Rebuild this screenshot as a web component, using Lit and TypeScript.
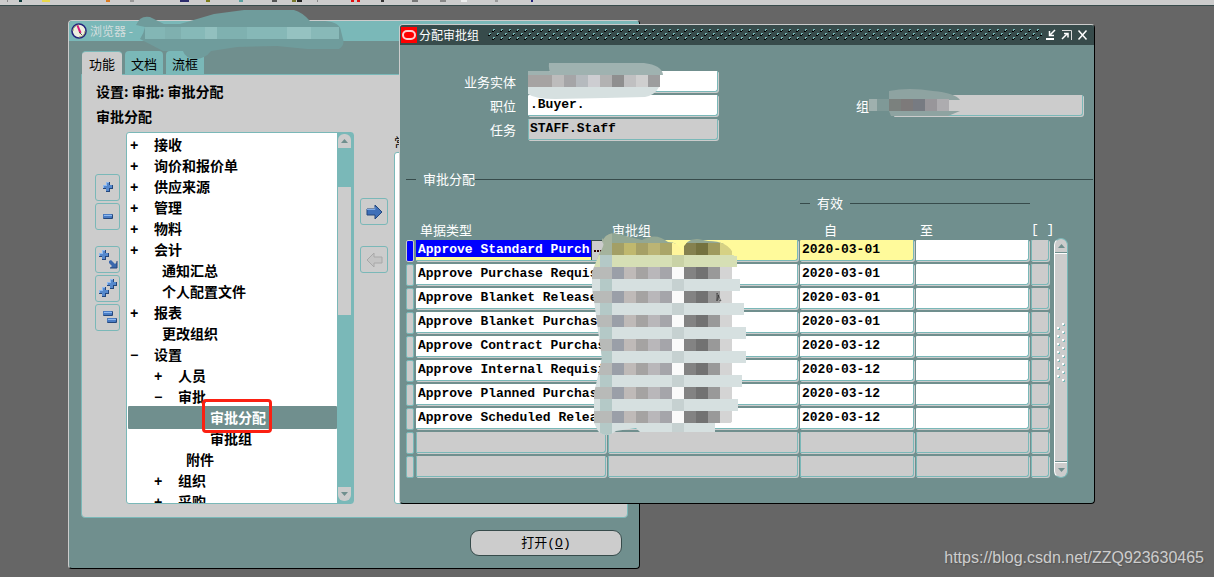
import { LitElement, html, css, svg } from "lit";
import { customElement, property } from "lit/decorators.js";
import { classMap } from "lit/directives/class-map.js";

const palette = css`
  :host {
    --panel: #708f8e;
    --teal: #7ab8b8;
    --grey: #cccccc;
    --dark: #374b4b;
    --cjk: "Noto Sans CJK SC", "Noto Sans", sans-serif;
    --mono: "Liberation Mono", "Noto Sans CJK SC", monospace;
    box-sizing: border-box;
    font: 13px/20px var(--cjk);
  }
  *,
  *::before,
  *::after {
    box-sizing: border-box;
  }
  button,
  input {
    font: inherit;
    color: inherit;
    margin: 0;
    padding: 0;
    border: 0;
    border-radius: 0;
    background: none;
    outline: none;
  }
  svg {
    display: block;
  }
`;

type Block = [number, number, string];

/** A strip of mosaic squares, each given as x, width and colour. */
const mosaic = (blocks: Block[], y: number) =>
  blocks.map(([x, w, c]) => svg`<rect x=${x} y=${y} width=${w} height="12" fill=${c}></rect>`);

/* ---------- icons ---------- */

const plus = (x: number, y: number) => svg`
  <path d="M${x + 3} ${y}h4v3h3v4h-3v3h-4v-3h-3v-4h3z" fill="#24477c"></path>
  <path d="M${x + 3} ${y}h3v3h3v3h-3v3h-3v-3h-3v-3h3z" fill="#5588cc"></path>
  <path d="M${x + 3} ${y}h3v1h-2v3h-3v2h-1v-3h3z" fill="#8fbaf0"></path>`;
const minus = (x: number, y: number) => svg`
  <rect x=${x} y=${y} width="10" height="5" rx="1" fill="#24477c"></rect>
  <rect x=${x} y=${y} width="9" height="4" rx="1" fill="#4a7cc4"></rect>
  <rect x=${x + 1} y=${y + 1} width="8" height="1" fill="#8fbaf0"></rect>`;

const toolIcons: Record<string, unknown> = {
  expand: plus(7, 7),
  collapse: minus(7, 10),
  expandBranch: svg`${plus(3, 3)}
    <path d="M13 14l2-1 4 4 2-2v6h-7l2-2-3-3z" fill="#3a68ad"></path>
    <path d="M21 14v7h-7" fill="none" stroke="#24477c"></path>`,
  expandAll: svg`${plus(11, 3)}${plus(3, 11)}`,
  collapseAll: svg`${minus(7, 6)}${minus(11, 13)}`,
};

const compass = svg`
  <circle cx="8" cy="8" r="7" fill="#eef0e0" stroke="#23237c" stroke-width="1.6"></circle>
  <path d="M2 8a6 6 0 0 1 6-6M14 8a6 6 0 0 1-6 6" fill="none" stroke="#aaa875"></path>
  <path d="M5.500 2.500l2 0 3 7-2 1z" fill="#d8187c"></path>
  <path d="M8 9l3 3" stroke="#555" fill="none"></path>`;

/* ---------- navigator ---------- */

interface Node {
  text: string;
  level: number;
  sign?: "+" | "−";
  selected?: boolean;
}

const nodes: Node[] = [
  { text: "接收", level: 0, sign: "+" },
  { text: "询价和报价单", level: 0, sign: "+" },
  { text: "供应来源", level: 0, sign: "+" },
  { text: "管理", level: 0, sign: "+" },
  { text: "物料", level: 0, sign: "+" },
  { text: "会计", level: 0, sign: "+" },
  { text: "通知汇总", level: 0 },
  { text: "个人配置文件", level: 0 },
  { text: "报表", level: 0, sign: "+" },
  { text: "更改组织", level: 0 },
  { text: "设置", level: 0, sign: "−" },
  { text: "人员", level: 1, sign: "+" },
  { text: "审批", level: 1, sign: "−" },
  { text: "审批分配", level: 2, selected: true },
  { text: "审批组", level: 2 },
  { text: "附件", level: 1 },
  { text: "组织", level: 1, sign: "+" },
  { text: "采购", level: 1, sign: "+" },
];

@customElement("nav-tree")
export class NavTree extends LitElement {
  static styles = [
    palette,
    css`
      :host {
        display: flex;
        height: 372px;
        border: 1px solid var(--teal);
        border-radius: 3px;
        background: #fff;
      }
      .viewport {
        flex: 1;
        overflow: hidden;
        padding: 1px 0 0 1px;
      }
      .list {
        list-style: none;
        margin: 0;
        padding: 0;
        font: bold 14px/21px var(--cjk);
        color: #000;
      }
      .node {
        position: relative;
        display: flex;
        height: 21px;
        padding-left: calc(2px + var(--level) * 24px);
        white-space: nowrap;
      }
      .sign {
        width: 24px;
        padding-top: 2px;
        font: bold 14px/21px var(--mono);
        text-align: left;
      }
      .leaf {
        padding-left: 32px;
      }
      .selected {
        background: var(--panel);
        box-shadow: 0 1px var(--panel), 0 -1px var(--panel);
        border-radius: 1px;
        color: #fff;
      }
      .mark {
        position: absolute;
        z-index: 1;
        left: 74px;
        top: -8px;
        width: 70px;
        height: 34px;
        border: 3px solid #fb2012;
        border-radius: 4px;
      }
      .bar {
        display: flex;
        flex-direction: column;
        width: 16px;
        padding: 1px 2px 2px 1px;
        background: var(--teal);
      }
      .step {
        display: grid;
        place-items: center;
        height: 14px;
        background: var(--grey);
      }
      .up {
        border-radius: 6px 6px 0 0;
      }
      .down {
        border-radius: 0 0 6px 6px;
      }
      .track {
        flex: 1;
        padding-top: 39px;
      }
      .thumb {
        height: 128px;
        background: var(--grey);
      }
    `,
  ];

  render() {
    return html`
      <div class="viewport">
        <ul class="list" role="tree">
          ${nodes.map(
            (n) => html`<li
              role="treeitem"
              class=${classMap({ node: true, selected: !!n.selected })}
              style="--level:${n.level}"
            >
              ${n.sign ? html`<button class="sign">${n.sign}</button>` : ""}
              <span class=${classMap({ leaf: !n.sign })}>${n.text}</span>
              ${n.selected ? html`<span class="mark"></span>` : ""}
            </li>`
          )}
        </ul>
      </div>
      <div class="bar">
        <button class="step up" aria-label="向上">
          <svg width="7" height="4"><path d="M0 4l3.500-4 3.500 4z" fill="#708f8e"></path></svg>
        </button>
        <div class="track"><div class="thumb"></div></div>
        <button class="step down" aria-label="向下">
          <svg width="7" height="4"><path d="M0 0l3.500 4 3.500-4z" fill="#708f8e"></path></svg>
        </button>
      </div>
    `;
  }
}

@customElement("navigator-window")
export class NavigatorWindow extends LitElement {
  static styles = [
    palette,
    css`
      :host {
        display: block;
        border: 1px solid #000;
        border-top-color: var(--grey);
        border-left-color: var(--grey);
        border-radius: 4px;
        background: var(--panel);
      }
      .title {
        position: relative;
        display: flex;
        align-items: center;
        gap: 3px;
        height: 20px;
        padding-left: 2px;
        border-radius: 3px 3px 0 0;
        background: var(--teal);
        color: #d4dede;
        font-size: 12px;
      }
      .smudge {
        position: absolute;
        left: 66px;
        top: -12px;
      }
      .body {
        padding: 10px 11px 12px 12px;
      }
      .tabs {
        display: flex;
        gap: 3px;
        padding-left: 1px;
      }
      .tab {
        height: 23px;
        padding: 2px 6px 0 6px;
        border-radius: 4px 4px 0 0;
        background: var(--teal);
        color: #000;
        line-height: 20px;
      }
      .current {
        width: 40px;
        border-top: 1px solid var(--teal);
        background: var(--grey);
        box-shadow: 0 1px var(--grey);
      }
      .panel {
        padding: 4px 4px 13px 13px;
        border: 1px solid var(--teal);
        border-radius: 0 0 4px 4px;
        background: var(--grey);
      }
      .path {
        margin: 0;
        padding-left: 1px;
        font: bold 14px/25px var(--cjk);
        color: #000;
      }
      .columns {
        display: grid;
        grid-template-columns: 25px 228px 28px 1fr;
        column-gap: 6px;
        padding-top: 3px;
      }
      .tools {
        display: flex;
        flex-direction: column;
        gap: 2px;
        padding-top: 42px;
      }
      .tool {
        display: block;
        height: 27px;
        border: 1px solid var(--teal);
        border-radius: 3px;
      }
      .apart {
        margin-top: 14px;
      }
      .moves {
        display: flex;
        flex-direction: column;
        gap: 21px;
        padding-top: 66px;
      }
      .recent {
        display: flex;
        flex-direction: column;
        color: #000;
      }
      .list {
        flex: 1;
        border: 1px solid var(--teal);
        border-radius: 3px;
        background: #fff;
      }
      .footer {
        display: flex;
        justify-content: flex-end;
        padding: 12px 6px 0;
      }
      .open {
        width: 152px;
        height: 26px;
        border: 1px solid var(--dark);
        border-radius: 9px;
        background: var(--grey);
        color: #000;
      }
      .key {
        font-family: var(--mono);
      }
    `,
  ];

  private tool(name: string, label: string, apart = false) {
    return html`<button class=${classMap({ tool: true, apart })} aria-label=${label}>
      <svg width="23" height="25">${toolIcons[name]}</svg>
    </button>`;
  }

  render() {
    return html`
      <div class="title">
        <svg width="16" height="16">${compass}</svg>
        <span>浏览器 -</span>
        <svg class="smudge" width="210" height="54">
          <path
            d="M1 16q4-10 14-8l14 7h16l34-10 30-4h50q8 2 16 11h15q15 1 16 10l2 8q2 6-4 10h-32l-30-3-40 1-26 4q-6 8-16 8-10-1-12-8H28L5 30q4-6 5-12z"
            fill="#6f9c9c"
          ></path>
          ${mosaic(
            [
              [10, 20, "#83b6b5"],
              [30, 16, "#7fb0af"],
              [46, 24, "#86b9b8"],
              [70, 12, "#92c0bf"],
              [82, 30, "#7fb1b0"],
              [112, 40, "#86b8b7"],
              [152, 24, "#95c2c1"],
              [176, 28, "#88b9b8"],
            ],
            18
          )}
        </svg>
      </div>
      <div class="body">
        <div class="tabs">
          <button class="tab current">功能</button>
          <button class="tab">文档</button>
          <button class="tab">流框</button>
        </div>
        <div class="panel">
          <p class="path">设置: 审批: 审批分配</p>
          <p class="path">审批分配</p>
          <div class="columns">
            <div class="tools">
              ${this.tool("expand", "展开")} ${this.tool("collapse", "折叠")}
              ${this.tool("expandBranch", "展开分支", true)} ${this.tool("expandAll", "全部展开")}
              ${this.tool("collapseAll", "全部折叠")}
            </div>
            <nav-tree></nav-tree>
            <div class="moves">
              <button class="tool" aria-label="添加">
                <svg width="26" height="25">
                  <path d="M6 10h8V6l7 7-7 7v-4H6z" fill="#3f6fb8" stroke="#24477c"></path>
                  <path d="M6 10.500h8V8" fill="none" stroke="#7eaae6"></path>
                </svg>
              </button>
              <button class="tool" aria-label="移除">
                <svg width="26" height="25">
                  <path d="M21 10h-8V6l-7 7 7 7v-4h8z" fill="#c4c4c4" stroke="#a8a8a8"></path>
                </svg>
              </button>
            </div>
            <div class="recent">
              <span>常</span>
              <div class="list"></div>
            </div>
          </div>
        </div>
        <div class="footer">
          <button class="open">打开<span class="key">(<u>O</u>)</span></button>
        </div>
      </div>
    `;
  }
}

/* ---------- assignment form ---------- */

const rows: [string, string][] = [
  ["Approve Standard Purch", "2020-03-01"],
  ["Approve Purchase Requisition", "2020-03-01"],
  ["Approve Blanket Releases", "2020-03-01"],
  ["Approve Blanket Purchases", "2020-03-01"],
  ["Approve Contract Purchases", "2020-03-12"],
  ["Approve Internal Requisition", "2020-03-12"],
  ["Approve Planned Purchases", "2020-03-12"],
  ["Approve Scheduled Releases", "2020-03-12"],
  ["", ""],
  ["", ""],
];

const yellowBlocks: Block[] = [
  [20, 12, "#a39f66"], [32, 12, "#c0b86e"], [44, 12, "#a6a066"], [56, 12, "#bbb474"],
  [68, 12, "#aaa568"], [80, 12, "#fff59b"], [92, 12, "#85814f"], [104, 12, "#75723f"],
  [116, 12, "#9f9a5e"], [128, 12, "#d6d184"],
];
const greyBlocks: Block[] = [
  [0, 20, "#b8bab8"], [20, 12, "#9a9fa8"], [32, 12, "#bfbab8"], [44, 12, "#a5a3a2"],
  [56, 12, "#b9b7ba"], [68, 12, "#a5a5aa"], [80, 12, "#fafafa"], [92, 12, "#838383"],
  [104, 12, "#727272"], [116, 12, "#999999"], [128, 12, "#d4d4d4"],
];
const stripEnds = [145, 148, 152, 154, 154, 150, 146, 123];

@customElement("form-field")
export class FormField extends LitElement {
  @property() value = "";
  @property() tone = "white";
  @property() label = "";
  @property({ type: Boolean }) lov = false;

  static styles = [
    palette,
    css`
      :host {
        display: block;
        padding: 0 2px 1px 0;
      }
      .box {
        display: flex;
        height: 21px;
        border: solid var(--teal);
        border-width: 0 1px 1px 0;
        border-radius: 1px 1px 3px 1px;
        box-shadow: 1px 1px var(--grey);
        background: #fff;
      }
      .grey {
        background: var(--grey);
        box-shadow: 1px 1px var(--grey), 1px 0 var(--teal) inset;
      }
      .yellow {
        background: #fffa9b;
      }
      .text {
        flex: 1;
        min-width: 0;
        height: 20px;
        padding: 0 0 0 2px;
        font: bold 13px/20px var(--mono);
        color: #000;
      }
      .picked {
        background: linear-gradient(#00f 0 17px, #fffa9b 17px);
        color: #fff;
      }
      .more {
        width: 14px;
        border: solid var(--dark);
        border-width: 1px 0 0 1px;
        background: var(--grey);
        display: grid;
        place-items: center;
      }
    `,
  ];

  render() {
    return html`<div class="box ${this.tone}">
      <input
        class=${classMap({ text: true, picked: this.lov })}
        aria-label=${this.label}
        .value=${this.value}
      />
      ${this.lov
        ? html`<button class="more" aria-label="值列表">
            <svg width="9" height="2"><path d="M0 0h2v2H0zM3 0h2v2H3zM6 0h2v2H6z" fill="#300"></path></svg>
          </button>`
        : ""}
    </div>`;
  }
}

@customElement("assign-window")
export class AssignWindow extends LitElement {
  static styles = [
    palette,
    css`
      :host {
        display: block;
        border: 1px solid #000;
        border-top-color: var(--grey);
        border-left-color: var(--grey);
        border-radius: 4px;
        background: var(--panel);
        color: #fff;
      }
      .title {
        display: flex;
        align-items: center;
        height: 20px;
        padding: 0 4px 0 1px;
        border-radius: 3px 3px 0 0;
        background: var(--dark);
        font-size: 12px;
      }
      .name {
        padding: 0 8px 0 2px;
      }
      .texture {
        flex: 1;
        height: 12px;
      }
      .control {
        width: 16px;
        height: 12px;
        padding-left: 3px;
      }
      .head {
        display: grid;
        grid-template-columns: 116px 192px 1fr 192px;
        grid-auto-rows: 22px;
        gap: 2px 12px;
        padding: 26px 9px 0 0;
      }
      .caption {
        text-align: right;
        line-height: 22px;
      }
      .wide {
        padding-right: 12px;
      }
      .slot {
        position: relative;
      }
      .start {
        grid-column: 1;
      }
      .veil {
        position: absolute;
        left: 0;
        top: -9px;
      }
      .groupveil {
        position: absolute;
        left: -26px;
        top: -8px;
      }
      .rule {
        display: flex;
        align-items: center;
        line-height: 20px;
        font-weight: normal;
      }
      .rule::before,
      .rule::after {
        content: "";
        height: 1px;
        background: var(--dark);
      }
      .rule::before {
        width: 10px;
        margin-right: 7px;
      }
      .rule::after {
        flex: 1;
      }
      .section {
        margin: 28px 1px 0 6px;
      }
      .block {
        position: relative;
        display: flex;
        gap: 3px;
        padding: 4px 0 23px 6px;
      }
      .grid {
        table-layout: fixed;
        width: 645px;
        border-collapse: collapse;
      }
      .grid th,
      .grid td {
        padding: 0;
        height: 24px;
        text-align: left;
        vertical-align: top;
        font-weight: normal;
      }
      .grid .super {
        height: 20px;
      }
      .grid .labels th {
        height: 27px;
        padding-left: 4px;
        vertical-align: bottom;
        line-height: 20px;
      }
      .grid .labels .from {
        padding-left: 24px;
      }
      .grid .labels .flag {
        padding-left: 0;
        font-family: var(--mono);
        white-space: nowrap;
      }
      .span {
        margin-right: 1px;
      }
      .span::after {
        margin-left: 7px;
      }
      .c0 { width: 10px; }
      .c1 { width: 192px; }
      .c3 { width: 116px; }
      .c4 { width: 115px; }
      .c5 { width: 20px; }
      .marker {
        display: block;
        width: 8px;
        height: 22px;
        border: 1px solid var(--teal);
        border-radius: 2px;
        background: var(--grey);
      }
      .here {
        border-color: var(--grey);
        background: #00f;
      }
      .scroll {
        display: flex;
        flex-direction: column;
        width: 14px;
        height: 240px;
        margin-top: 45px;
        border: 1px solid var(--teal);
        border-left-color: #fff;
        border-radius: 7px;
        background: var(--grey);
      }
      .step {
        display: grid;
        place-items: center;
        height: 14px;
      }
      .thumb {
        flex: 1;
        display: grid;
        justify-items: center;
        padding-top: 69px;
        border-top: 1px solid #fff;
        border-bottom: 1px solid #fff;
        box-shadow: 0 -1px var(--panel), 0 -1px var(--panel) inset;
      }
      .rowsveil {
        position: absolute;
        left: 192px;
        top: 41px;
      }
    `,
  ];

  render() {
    return html`
      <div class="title">
        <svg width="16" height="16">
          <rect width="16" height="16" fill="#f00"></rect>
          <rect x="2" y="4" width="12" height="8" rx="4" fill="none" stroke="#ffd0d0" stroke-width="2"></rect>
        </svg>
        <span class="name">分配审批组</span>
        <svg class="texture">
          <defs>
            <pattern id="dots" width="8" height="8" patternUnits="userSpaceOnUse">
              <path d="M6 0h2v1h-1v1h-1zM2 4h2v1h-1v1h-1z" fill="#7ab8b8"></path>
              <path d="M5 2h2v-1h1v1h-1v1h-2zM1 6h2v-1h1v1h-1v1h-2z" fill="#000"></path>
            </pattern>
          </defs>
          <rect width="100%" height="12" fill="url(#dots)"></rect>
        </svg>
        <button class="control" aria-label="最小化">
          <svg width="12" height="12">
            <path d="M10 1L5 6M4.500 2v4.500H9" fill="none" stroke="#fff" stroke-width="1.500"></path>
            <path d="M1 10h8" stroke="#fff" stroke-width="2"></path>
          </svg>
        </button>
        <button class="control" aria-label="最大化">
          <svg width="12" height="12">
            <path d="M1 1.500h9.500V11" fill="none" stroke="#ddd"></path>
            <path d="M1 10l5-5M3 4.500h4v4" fill="none" stroke="#fff" stroke-width="1.500"></path>
          </svg>
        </button>
        <button class="control" aria-label="关闭">
          <svg width="12" height="12">
            <path d="M1.500 1.500l8 9M9.500 1.500l-8 9" stroke="#fff" stroke-width="1.500"></path>
          </svg>
        </button>
      </div>

      <div class="head">
        <span class="caption">业务实体</span>
        <div class="slot">
          <form-field label="业务实体"></form-field>
          <svg class="veil" width="140" height="38">
            <path d="M0 9h21l24 5H0z" fill="#9fb2b0"></path>
            <path d="M21 1h95q18 2 19 12H24q-4-5-3-12z" fill="#9fb2b0"></path>
            ${mosaic(
              [
                [0, 24, "#a6a3a2"], [24, 12, "#bdbcbc"], [36, 12, "#a5a5a7"], [48, 12, "#b5babe"],
                [60, 12, "#cdcdd1"], [72, 12, "#b2b2b2"], [84, 12, "#8f8f8f"], [96, 12, "#c0c0c1"],
                [108, 12, "#cfcfcf"], [120, 12, "#9d9d9e"],
              ],
              13
            )}
            <path d="M0 25h131q-4 8-14 10l-40 1-50 1q-20 0-27-5z" fill="#d6e0e0"></path>
          </svg>
        </div>
        <span></span>
        <span></span>
        <span class="caption start">职位</span>
        <form-field label="职位" value=".Buyer."></form-field>
        <span class="caption wide">组</span>
        <div class="slot">
          <form-field label="组" tone="grey"></form-field>
          <svg class="groupveil" width="96" height="36">
            <path d="M22 4q20-4 44 0 22 2 27 9H22zM22 24h71l-12 5H24z" fill="#8ea3a1"></path>
            ${mosaic(
              [
                [2, 8, "#9fb0ae"], [10, 12, "#7f9997"], [22, 12, "#7b817e"], [34, 12, "#7d7a7a"],
                [46, 12, "#777b82"], [58, 12, "#98969a"], [70, 12, "#adacaf"],
              ],
              12
            )}
          </svg>
        </div>
        <span class="caption start">任务</span>
        <form-field label="任务" value="STAFF.Staff" tone="grey"></form-field>
      </div>

      <div class="rule section">审批分配</div>

      <div class="block">
        <table class="grid">
          <colgroup>
            <col class="c0" /><col class="c1" /><col class="c1" />
            <col class="c3" /><col class="c4" /><col class="c5" />
          </colgroup>
          <thead>
            <tr>
              <th class="super" colspan="3"></th>
              <th class="super" colspan="2"><div class="rule span">有效</div></th>
              <th class="super"></th>
            </tr>
            <tr class="labels">
              <th></th>
              <th>单据类型</th>
              <th>审批组</th>
              <th class="from">自</th>
              <th>至</th>
              <th class="flag">[ ]</th>
            </tr>
          </thead>
          <tbody>
            ${rows.map(([type, from], i) => {
              const tone = i === 0 ? "yellow" : type ? "white" : "grey";
              return html`<tr>
                <td><span class=${classMap({ marker: true, here: i === 0 })}></span></td>
                <td>
                  <form-field label="单据类型" value=${type} tone=${tone} ?lov=${i === 0}></form-field>
                </td>
                <td><form-field label="审批组" tone=${tone}></form-field></td>
                <td><form-field label="自" value=${from} tone=${tone}></form-field></td>
                <td><form-field label="至" tone=${type ? "white" : "grey"}></form-field></td>
                <td><form-field label="[ ]" tone="grey"></form-field></td>
              </tr>`;
            })}
          </tbody>
        </table>
        <div class="scroll">
          <button class="step" aria-label="向上">
            <svg width="7" height="4"><path d="M0 4l3.500-4 3.500 4z" fill="#708f8e"></path></svg>
          </button>
          <div class="thumb">
            <svg width="8" height="60">
              ${[0, 1, 2, 3, 4, 5, 6, 7].map(
                (k) => svg`
                  <rect x="6" y=${k * 8 + 1} width="2" height="2" fill="#7ab8b8"></rect>
                  <rect x="5" y=${k * 8} width="2" height="2" fill="#fff"></rect>
                  <rect x="1" y=${k * 8 + 5} width="2" height="2" fill="#7ab8b8"></rect>
                  <rect x="0" y=${k * 8 + 4} width="2" height="2" fill="#fff"></rect>`
              )}
            </svg>
          </div>
          <button class="step" aria-label="向下">
            <svg width="7" height="4"><path d="M0 0l3.500 4 3.500-4z" fill="#708f8e"></path></svg>
          </button>
        </div>

        <svg class="rowsveil" width="160" height="210">
          <defs>
            <clipPath id="edge">
              <path
                d="M10 13q2-9 12-10l28 7q14-8 26 2 10 0 14 9 4-13 16-12l10 2q10 0 16 3 8 4 10 12l20 0V190h-20l-14 12H48l-4-4-20 3q-10 8-18 0l-4-8v-30l8-35-3-20-4-30-3-20v-16l8-20q6-8 2-14z"
              ></path>
            </clipPath>
          </defs>
          <g clip-path="url(#edge)">
            <rect width="142" height="14" fill="#92a794"></rect>
            <rect width="20" height="26" y="3" fill="#a5b39d"></rect>
            ${mosaic(yellowBlocks, 13)}
            ${[0, 1, 2, 3, 4, 5, 6, 7].map(
              (k) => svg`
                ${k ? mosaic(greyBlocks, 13 + 24 * k) : ""}
                <rect x="0" y=${25 + 24 * k} width=${stripEnds[k]} height="12" fill=${k ? "#d6e0e0" : "#d6dfb5"}></rect>
                <rect x="8" y=${25 + 24 * k} width="12" height="12" fill="#b4c9c7"></rect>
                <rect x="80" y=${25 + 24 * k} width="12" height="12" fill=${k ? "#c6d1d1" : "#c9d2a6"}></rect>`
            )}
          </g>
          <path d="M125 63v8l1-6 1 5 2 1z" fill="#fff" stroke="#000" stroke-width="0.500"></path>
        </svg>
      </div>
    `;
  }
}

/* ---------- desktop ---------- */

/* x, width and colour of the toolbar glyph feet that show above the desktop */
const feet: Block[] = [
  [7, 1, "#888"], [19, 3, "#0d3a3a"], [42, 8, "#e8d84a"], [106, 4, "#d97a20"],
  [130, 4, "#999"], [180, 9, "#2b2b6b"], [206, 4, "#7c7c18"], [239, 4, "#5aa0a0"],
  [272, 5, "#555"], [292, 4, "#77772a"], [297, 5, "#222"], [317, 1, "#888"],
  [351, 3, "#e01010"], [357, 3, "#e01010"], [381, 3, "#333"], [412, 6, "#777"],
  [440, 6, "#888"], [461, 6, "#eee"], [495, 3, "#999"], [531, 2, "#22227a"],
];

@customElement("app-root")
export class AppRoot extends LitElement {
  static styles = [
    palette,
    css`
      :host {
        position: relative;
        display: block;
        min-height: 100vh;
        background: #666;
        overflow: hidden;
      }
      .toolbar {
        height: 6px;
        border-bottom: 1px solid var(--dark);
        background: var(--grey);
      }
      .navigator {
        position: absolute;
        left: 68px;
        top: 20px;
        width: 572px;
      }
      .assign {
        position: absolute;
        left: 399px;
        top: 24px;
        width: 696px;
      }
      .credit {
        position: absolute;
        right: 10px;
        bottom: 8px;
        font: 16px/22px "Liberation Sans", Arial, sans-serif;
        color: #cdcdcd;
        text-shadow: 1px 1px 1px #555;
        text-decoration: none;
      }
    `,
  ];

  render() {
    return html`
      <div class="toolbar">
        <svg width="540" height="3">
          ${feet.map(([x, w, c]) => svg`<rect x=${x} y="0" width=${w} height="2" fill=${c}></rect>`)}
        </svg>
      </div>
      <navigator-window class="navigator"></navigator-window>
      <assign-window class="assign"></assign-window>
      <a class="credit" href="https://blog.csdn.net/ZZQ923630465">https://blog.csdn.net/ZZQ923630465</a>
    `;
  }
}
